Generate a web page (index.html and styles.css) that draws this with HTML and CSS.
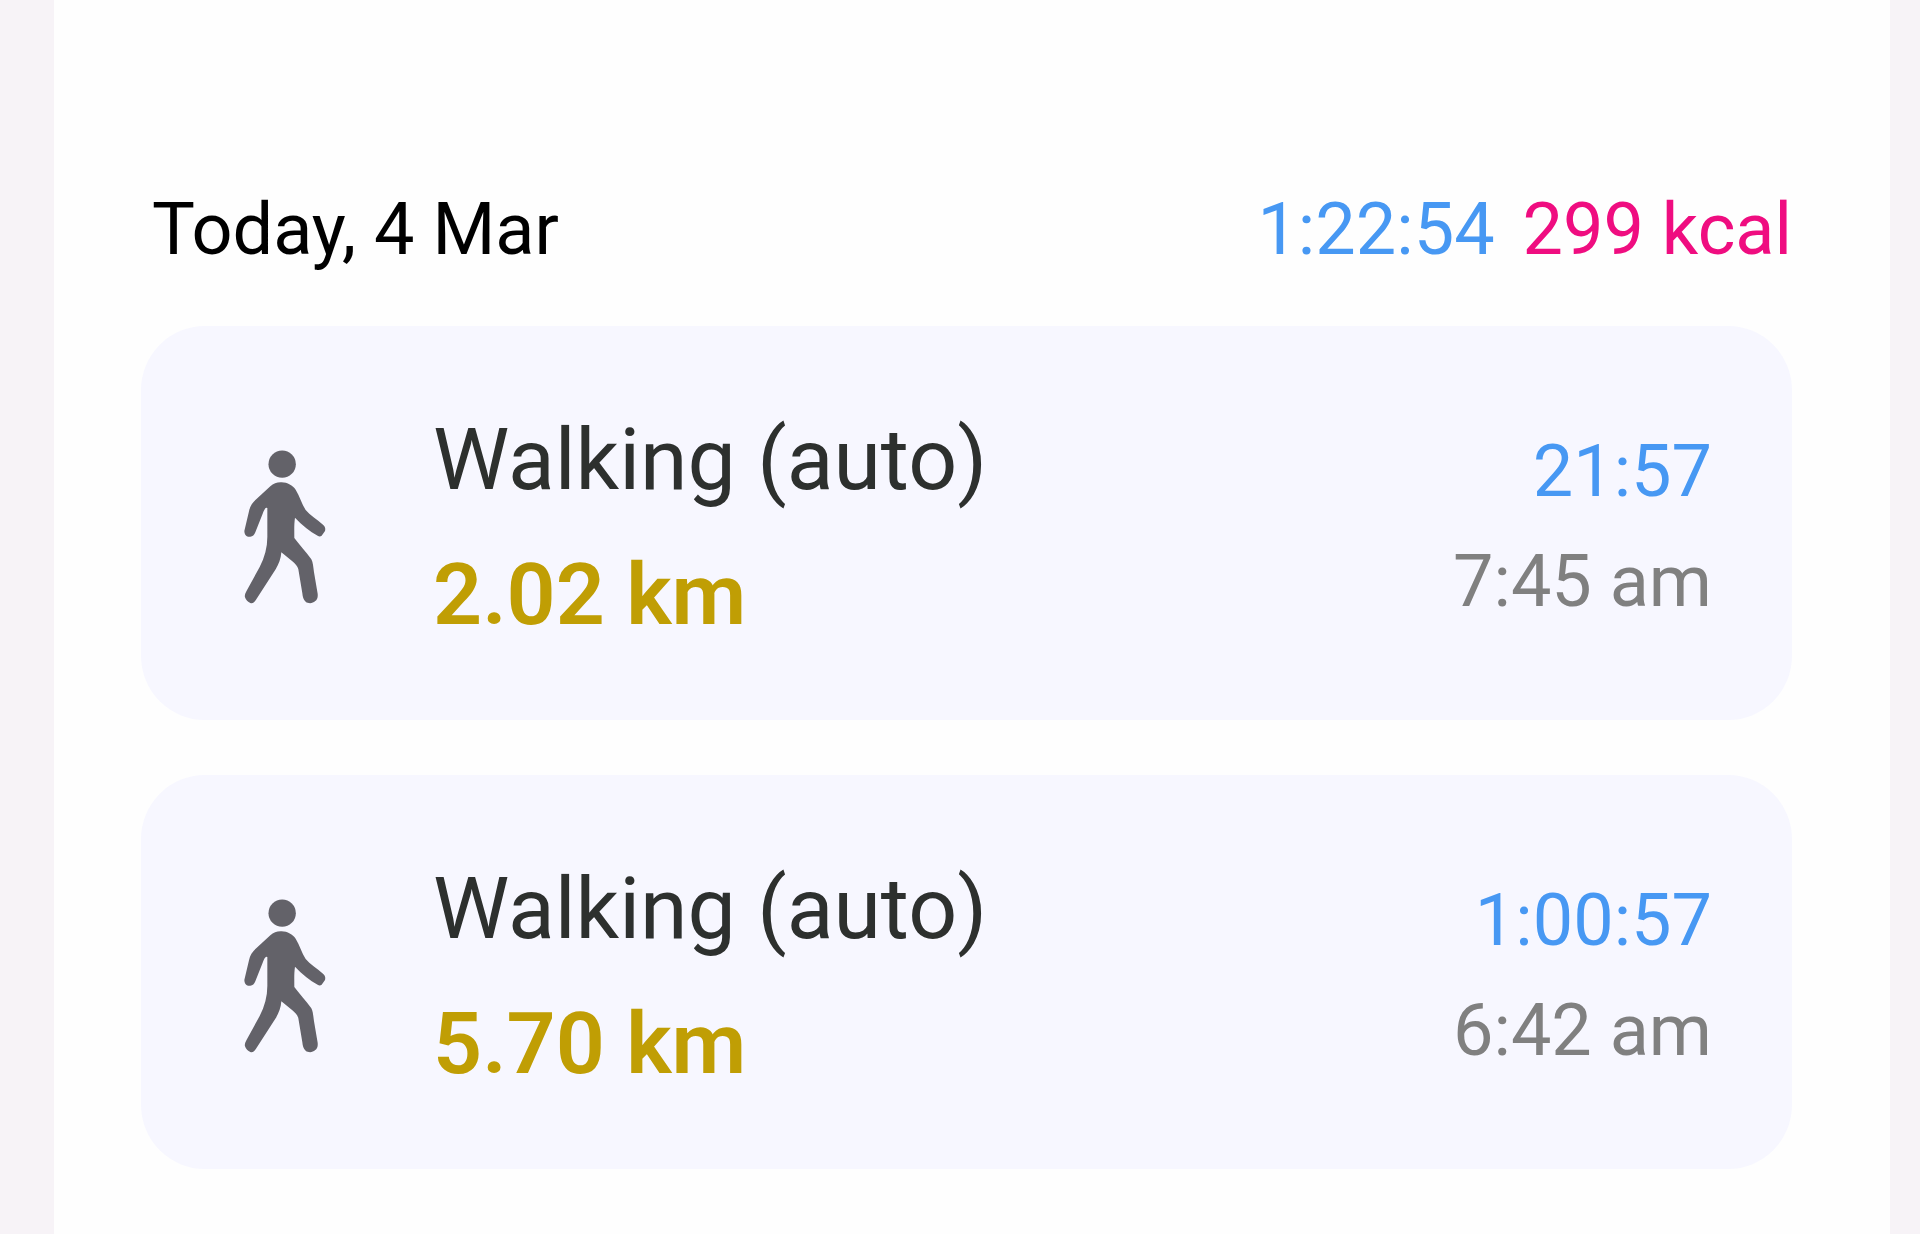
FILE: index.html
```html
<!DOCTYPE html>
<html lang="en">
<head>
  <meta charset="UTF-8">
  <meta name="viewport" content="width=device-width, initial-scale=1.0">
  <title>Exercise History</title>
  <link rel="stylesheet" href="styles.css">
</head>
<body>
  <!-- Walking figure, shared by the workout cards -->
  <svg class="sprite" aria-hidden="true">
    <symbol id="walk" viewBox="72 55 246 462">
      <circle cx="186.500" cy="97.500" r="41"/>
      <path d="M182 152C201 151 218 161 227 174C239 194 245 216 257 235C270 250 290 263 309 279C315 284 317 290 315 298L305 312C301 315 297 315 293 312C269 299 247 281 225 258C222 277 223 299 223 319C238 340 257 358 274 383C279 392 280 407 282 422L293 486C294 497 292 504 285 509C278 516 264 516 257 510C250 505 248 495 247 485L235 413C233 403 225 396 217 389L184 362C183 380 176 398 167 413L107 506C102 513 97 516 91 514C84 511 77 505 75 497C73 490 77 483 80 477L119 406C134 377 142 347 142 316V229C136 226 132 236 128 246L106 302C103 310 98 315 91 315H84C77 313 73 307 73 298L87 239C90 223 97 214 107 204L151 164C160 156 170 152 182 152Z"/>
    </symbol>
  </svg>

  <main class="panel">
    <header class="day-header">
      <h1 class="day">Today, 4 Mar</h1>
      <div class="totals">
        <span class="duration">1:22:54</span>
        <span class="calories">299 kcal</span>
      </div>
    </header>

    <ul class="workouts">
      <li class="card">
        <svg class="icon" aria-hidden="true"><use href="#walk"/></svg>
        <div class="info">
          <h2 class="name">Walking (auto)</h2>
          <p class="distance">2.02 km</p>
        </div>
        <div class="times">
          <p class="duration">21:57</p>
          <p class="start">7:45 am</p>
        </div>
      </li>
      <li class="card">
        <svg class="icon" aria-hidden="true"><use href="#walk"/></svg>
        <div class="info">
          <h2 class="name">Walking (auto)</h2>
          <p class="distance">5.70 km</p>
        </div>
        <div class="times">
          <p class="duration">1:00:57</p>
          <p class="start">6:42 am</p>
        </div>
      </li>
    </ul>
  </main>
</body>
</html>
```

FILE: styles.css
```css
/* Reset some default styling */
* {
  margin: 0;
  padding: 0;
  box-sizing: border-box;
}

body {
  font-family: Roboto, 'Liberation Sans', sans-serif;
  font-size: 72px;
  background-color: #f7f3f7;
  color: #000;
}

.sprite {
  position: absolute;
  width: 0;
  height: 0;
}

/* White panel */
.panel {
  min-height: 100vh;
  margin: 0 30px 0 54px;
  padding: 188px 98px 64px 87px;
  background-color: #fefefe;
}

/* Day summary */
.day-header {
  display: flex;
  justify-content: space-between;
  padding-left: 11px;
  margin-bottom: 54px;
  line-height: 84px;
}

.day {
  font-size: 72px;
  font-weight: 400;
}

.totals {
  display: flex;
  gap: 28px;
}

.duration {
  color: #4798f3;
}

.calories {
  color: #ef0d80;
}

/* Workout cards */
.workouts {
  display: flex;
  flex-direction: column;
  gap: 55px;
  list-style: none;
}

.card {
  display: flex;
  align-items: center;
  gap: 107px;
  padding: 66px 80px 58px 103px;
  border-radius: 64px;
  background-color: #f7f7ff;
}

.icon {
  flex: none;
  width: 82px;
  height: 154px;
  fill: #636269;
}

.info {
  flex: 1;
  font-size: 86px;
  line-height: 135px;
}

.name {
  font-size: 86px;
  font-weight: 400;
  color: #2d302e;
}

.distance {
  font-weight: 600;
  color: #c09e04;
}

.times {
  line-height: 110px;
  text-align: right;
}

.start {
  color: #808080;
}
```
